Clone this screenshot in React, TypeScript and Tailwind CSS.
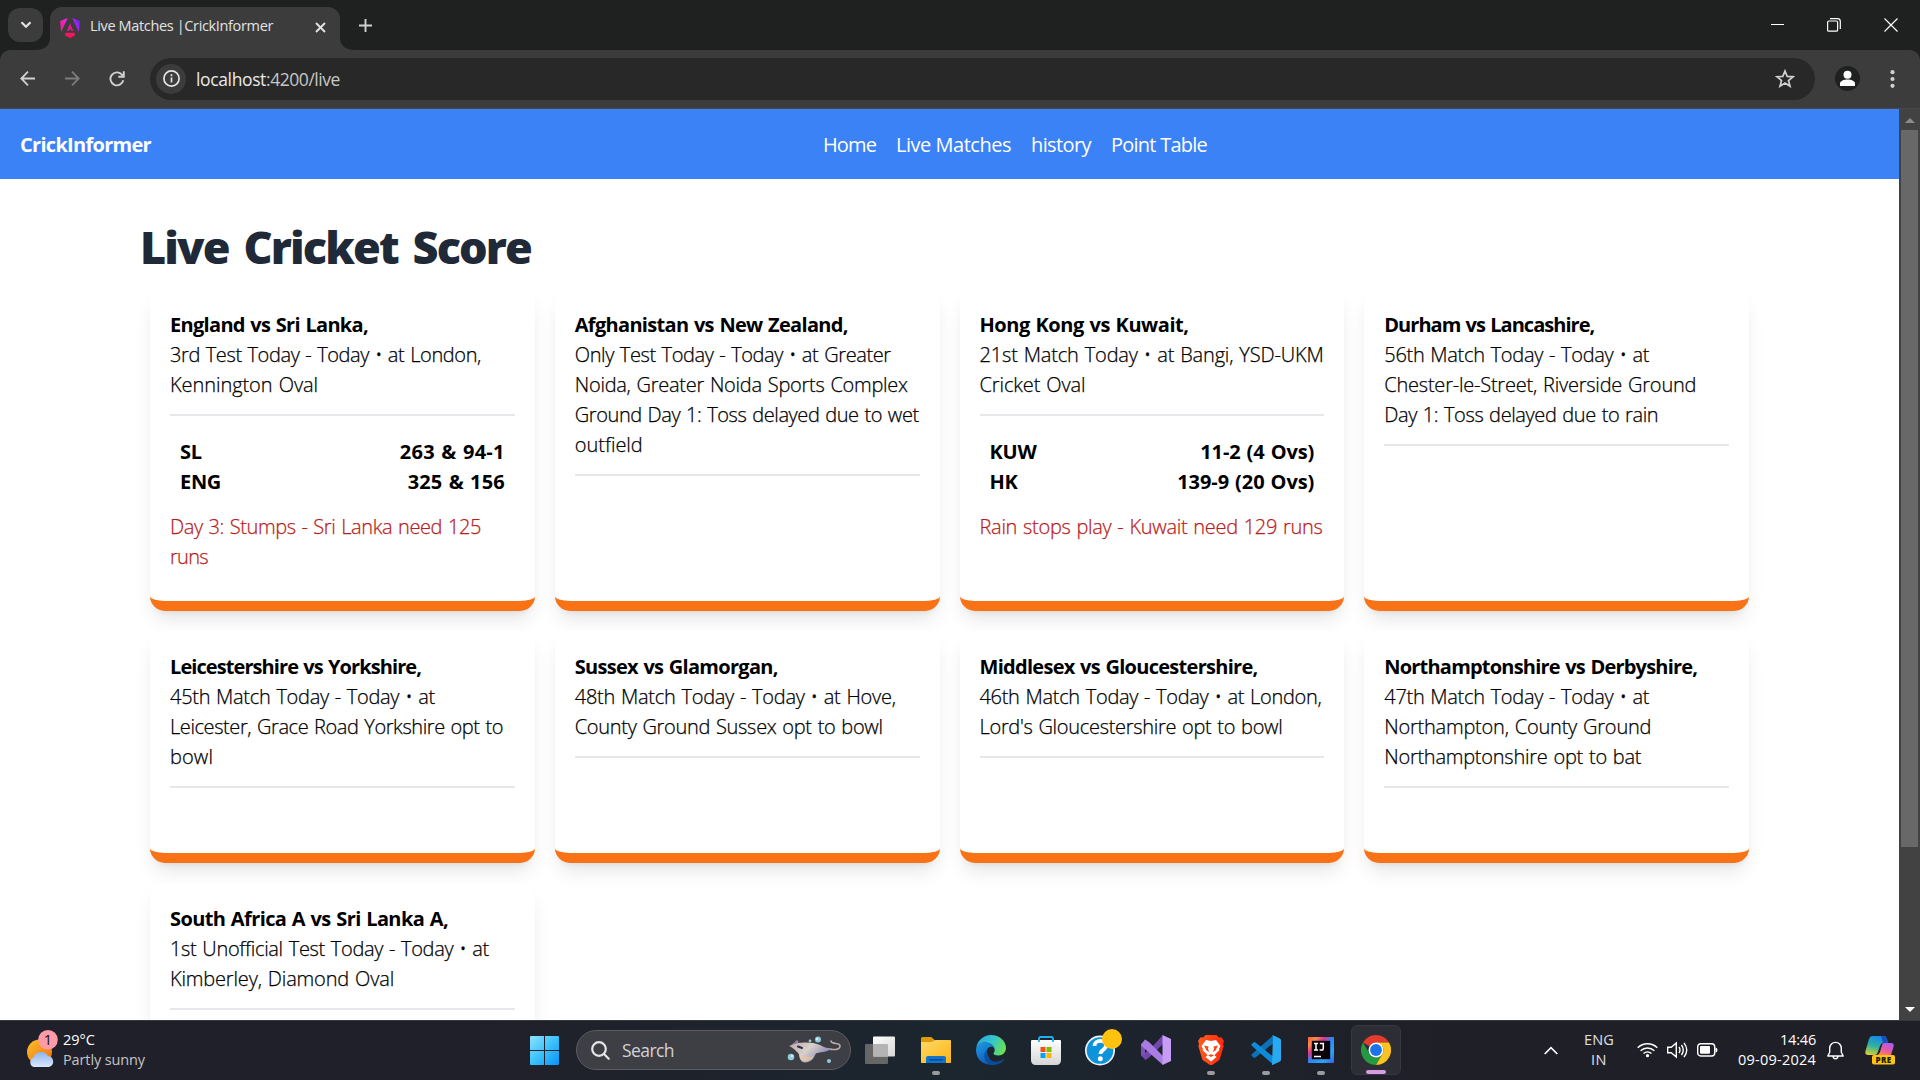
import React, { useLayoutEffect, useRef, useState } from "react";

/** A single line of text whose letter spacing is adjusted to fill `w` pixels. */
function Fit({ w, className = "", children }: { w: number; className?: string; children: string }) {
  const ref = useRef<HTMLSpanElement>(null);
  const [ls, setLs] = useState(0);
  useLayoutEffect(() => {
    if (ref.current) {
      const natural = ref.current.getBoundingClientRect().width;
      setLs((w - natural) / children.length);
    }
  }, []);
  return (
    <span ref={ref} className={"inline-block whitespace-nowrap " + className} style={{ letterSpacing: ls }}>
      {children}
    </span>
  );
}

type Line = [string, number];
type Match = { title: Line; lines: Line[]; scores?: [Line, Line][]; status?: Line[] };

const matches: Match[] = [
  {
    title: ["England vs Sri Lanka,", 198],
    lines: [["3rd Test Today - Today • at London,", 311], ["Kennington Oval", 148]],
    scores: [[["SL", 22], ["263 & 94-1", 105]], [["ENG", 41], ["325 & 156", 97]]],
    status: [["Day 3: Stumps - Sri Lanka need 125", 311], ["runs", 38]],
  },
  {
    title: ["Afghanistan vs New Zealand,", 273],
    lines: [
      ["Only Test Today - Today • at Greater", 316],
      ["Noida, Greater Noida Sports Complex", 333],
      ["Ground Day 1: Toss delayed due to wet", 344],
      ["outfield", 68],
    ],
  },
  {
    title: ["Hong Kong vs Kuwait,", 209],
    lines: [["21st Match Today • at Bangi, YSD-UKM", 344], ["Cricket Oval", 106]],
    scores: [[["KUW", 47], ["11-2 (4 Ovs)", 114]], [["HK", 28], ["139-9 (20 Ovs)", 137]]],
    status: [["Rain stops play - Kuwait need 129 runs", 343]],
  },
  {
    title: ["Durham vs Lancashire,", 210],
    lines: [
      ["56th Match Today - Today • at", 265],
      ["Chester-le-Street, Riverside Ground", 312],
      ["Day 1: Toss delayed due to rain", 274],
    ],
  },
  {
    title: ["Leicestershire vs Yorkshire,", 251],
    lines: [["45th Match Today - Today • at", 265], ["Leicester, Grace Road Yorkshire opt to", 333], ["bowl", 43]],
  },
  {
    title: ["Sussex vs Glamorgan,", 203],
    lines: [["48th Match Today - Today • at Hove,", 321], ["County Ground Sussex opt to bowl", 308]],
  },
  {
    title: ["Middlesex vs Gloucestershire,", 278],
    lines: [["46th Match Today - Today • at London,", 342], ["Lord's Gloucestershire opt to bowl", 303]],
  },
  {
    title: ["Northamptonshire vs Derbyshire,", 313],
    lines: [["47th Match Today - Today • at", 265], ["Northampton, County Ground", 267], ["Northamptonshire opt to bat", 257]],
  },
  {
    title: ["South Africa A vs Sri Lanka A,", 278],
    lines: [["1st Unofficial Test Today - Today • at", 319], ["Kimberley, Diamond Oval", 224]],
  },
];

function Card({ m }: { m: Match }) {
  return (
    <div className="rounded-[15px] border-b-[10px] border-[#f97316] bg-white px-5 pt-[21px] pb-[29px] text-[20px] leading-[30px] text-black [word-spacing:1px] shadow-[0_12px_19px_-4px_rgba(0,0,0,0.1),0_5px_7px_-5px_rgba(0,0,0,0.1)]">
      <div className="h-[30px]"><Fit w={m.title[1]} className="font-bold">{m.title[0]}</Fit></div>
      {m.lines.map(([t, w]) => (
        <div key={t} className="h-[30px]"><Fit w={w} className="font-light [-webkit-text-stroke:0.25px]">{t}</Fit></div>
      ))}
      <div className="mt-[14px] h-[2px] bg-[#e5e7eb]" />
      {m.scores ? (
        <div className="mt-[21px] px-[10px] font-bold">
          {m.scores.map(([a, b]) => (
            <div key={a[0]} className="flex h-[30px] justify-between">
              <Fit w={a[1]}>{a[0]}</Fit>
              <Fit w={b[1]}>{b[0]}</Fit>
            </div>
          ))}
        </div>
      ) : (
        <div className="h-[36px]" />
      )}
      {m.status && (
        <div className="mt-[15px] text-[#b91c1c]">
          {m.status.map(([t, w]) => (
            <div key={t} className="h-[30px]"><Fit w={w} className="font-light [-webkit-text-stroke:0.25px]">{t}</Fit></div>
          ))}
        </div>
      )}
    </div>
  );
}

function AngularIcon() {
  return (
    <svg className="h-5 w-5" viewBox="0 0 20 20">
      <defs>
        <linearGradient id="ng" x1="0" y1="0.6" x2="1" y2="0.2">
          <stop offset="0" stopColor="#f01d8f" /><stop offset="0.45" stopColor="#e62be0" /><stop offset="1" stopColor="#6a1bff" />
        </linearGradient>
        <linearGradient id="ngb" x1="0" y1="0" x2="0" y2="1">
          <stop offset="0" stopColor="#d91bb0" /><stop offset="1" stopColor="#ff1247" />
        </linearGradient>
      </defs>
      <path d="M7.800 0 0.100 3l1 11zM12.200 0l7.700 3-1 11z" fill="url(#ng)" />
      <path d="M10 5.600 6.800 13h1.900l.6-1.500h1.600l.6 1.500h1.900zM5.700 14.800h8.600l1 2.500L10 20l-5.300-2.700z" fill="url(#ngb)" />
    </svg>
  );
}

function BrowserTop() {
  return (
    <div className="h-[109px] bg-[#1f2120] text-[#e3e3e3]">
      <div className="flex h-[50px] items-start">
        <div className="mt-2 ml-2 flex h-[34px] w-[35px] items-center justify-center rounded-[12px] bg-[#3c3c3c]">
          <svg className="h-[8px] w-[12px]" viewBox="0 0 12 8" fill="none" stroke="#e3e3e3" strokeWidth="2.2"><path d="M1.500 1.300 6 5.800l4.500-4.500" /></svg>
        </div>
        <svg className="mt-[38px] -ml-[8px] h-3 w-[15px]" viewBox="0 0 15 12"><path d="M15 0v12H0C9 12 15 8 15 0z" fill="#3c3c3c" /></svg>
        <div className="mt-[7px] flex h-[43px] w-[290px] items-center rounded-t-[12px] bg-[#3c3c3c] pl-[10px]">
          <div className="-mt-px"><AngularIcon /></div>
          <div className="ml-[10px] h-[26px] text-[14.5px] leading-[20px]"><Fit w={183}>Live Matches |CrickInformer</Fit></div>
          <svg className="mb-[3px] ml-[42px] h-[11px] w-[11px]" viewBox="0 0 11 11" stroke="#e3e3e3" strokeWidth="1.900"><path d="M1 1l9 9M10 1l-9 9" /></svg>
        </div>
        <svg className="mt-[38px] h-3 w-[15px]" viewBox="0 0 15 12"><path d="M0 0v12h15C6 12 0 8 0 0z" fill="#3c3c3c" /></svg>
        <svg className="mt-[19px] ml-[4px] h-[13px] w-[13px]" viewBox="0 0 13 13" stroke="#d0d0d0" strokeWidth="1.900"><path d="M6.500 0v13M0 6.500h13" /></svg>
        <div className="ml-auto flex h-[49px] items-center pr-[22px]">
          <div className="mr-[-1px] ml-px h-px w-[13px] bg-white" />
          <svg className="ml-[44px] h-[14px] w-[14px]" viewBox="0 0 14 14" fill="none" stroke="#fff" strokeWidth="1.200"><rect x="0.600" y="3" width="10" height="10.200" rx="1.300" /><path d="M3 .7h7.500a2.800 2.800 0 0 1 2.800 2.800V11" /></svg>
          <svg className="ml-[43px] h-[14px] w-[14px]" viewBox="0 0 14 14" stroke="#fff" strokeWidth="1.200"><path d="M.5.5l13 13M13.500.5l-13 13" /></svg>
        </div>
      </div>
      <div className="flex h-[59px] items-center rounded-t-[10px] border-b border-[#484848] bg-[#3c3c3c] pb-px pl-5">
        <svg className="h-[15px] w-[15px]" viewBox="0 0 15 15" fill="none" stroke="#d0d0d0" strokeWidth="1.800"><path d="M15 7.500H1.500M8 .7 1.300 7.500 8 14.300" /></svg>
        <svg className="ml-[30px] h-[15px] w-[15px]" viewBox="0 0 15 15" fill="none" stroke="#7c7c7c" strokeWidth="1.800"><path d="M0 7.500h13.500M7 .7l6.700 6.800L7 14.300" /></svg>
        <svg className="ml-[29px] h-[16px] w-[16px]" viewBox="0 0 16 16" fill="none" stroke="#d0d0d0" strokeWidth="1.900"><path d="M14.300 9.300A6.500 6.500 0 1 1 12.700 3.400L14.500 5.400M14.800.3v5.500H9.300" /></svg>
        <div className="ml-[25px] flex h-[42px] w-[1665px] items-center rounded-full bg-[#282828] pl-[6px]">
          <div className="flex h-[30px] w-[30px] items-center justify-center rounded-full bg-[#3c3c3c]">
            <svg className="h-[17px] w-[17px]" viewBox="0 0 17 17" fill="none" stroke="#e3e3e3"><circle cx="8.500" cy="8.500" r="7.600" strokeWidth="1.700" /><path d="M8.500 7.500v5M8.500 4.300v1.900" strokeWidth="1.700" /></svg>
          </div>
          <div className="ml-[10px] flex pt-px text-[17.500px] leading-[24px]">
            <Fit w={70} className="text-[#e8e8e8]">localhost</Fit><Fit w={74} className="text-[#c7c7c7]">:4200/live</Fit>
          </div>
          <svg className="mr-5 ml-auto h-[19px] w-[20px]" viewBox="0 0 20 19" fill="none" stroke="#d0d0d0" strokeWidth="1.700"><path d="M10 2l2.200 5.400 5.800.4-4.500 3.700 1.500 5.700-5-3.200-5 3.200 1.500-5.700L2 7.800l5.800-.4z" /></svg>
        </div>
        <svg className="ml-5 h-[25px] w-[25px]" viewBox="0 0 25 25"><circle cx="12.500" cy="12.500" r="12.500" fill="#1f2120" /><circle cx="12.500" cy="8.700" r="4" fill="#fff" /><path d="M5 20v-2.500c0-2.500 4-4 7.500-4s7.500 1.500 7.500 4V20z" fill="#fff" /></svg>
        <svg className="ml-[30px] h-[18px] w-[5px]" viewBox="0 0 5 18" fill="#d0d0d0"><circle cx="2.500" cy="2.200" r="2.100" /><circle cx="2.500" cy="9" r="2.100" /><circle cx="2.500" cy="15.800" r="2.100" /></svg>
      </div>
    </div>
  );
}

function StartIcon() {
  return (
    <svg className="h-[29px] w-[29px]" viewBox="0 0 29 29">
      <defs><linearGradient id="win" x1="0" y1="0" x2="1" y2="1"><stop offset="0" stopColor="#8fe2ff" /><stop offset="0.500" stopColor="#3cc2fb" /><stop offset="1" stopColor="#0a92f8" /></linearGradient></defs>
      <path d="M0 1q0-1 1-1h13v14H0zM15 0h13q1 0 1 1v13H15zM0 15h14v14H1q-1 0-1-1zM15 15h14v13q0 1-1 1H15z" fill="url(#win)" />
    </svg>
  );
}

function RayIcon() {
  return (
    <svg className="h-[28px] w-[56px]" viewBox="0 0 56 28">
      <defs><linearGradient id="ray" x1="0" y1="0" x2="1" y2="0.500"><stop offset="0" stopColor="#b9a79b" /><stop offset="0.500" stopColor="#d9d0cb" /><stop offset="1" stopColor="#7f82b0" /></linearGradient></defs>
      <path d="M44 5c1 4 9 1 9 5s-6 4-12 3" fill="none" stroke="#b9aba6" strokeWidth="1.600" strokeLinecap="round" />
      <path d="M2 10c3-1 5-2 7-5 1-1 3 0 2 2 6-1 16-1 22 2 4 2 7 4 13 3-5 4-11 4-16 5-3 1-2 7-9 9-6 2-9-3-9-8-2-2-4-5-10-8z" fill="url(#ray)" />
      <path d="M18 25c-5 0-5-4-4-5 4 0 9 2 13 0-2 3-5 5-9 5z" fill="#edc79c" opacity=".7" />
      <path d="M9 5c-2 2-4 3-5 4l7-2c0-2-1-3-2-2z" fill="#8c78a8" />
      <path d="M11 10.500l4 1.500" stroke="#26304f" strokeWidth="2" strokeLinecap="round" />
      <circle cx="4" cy="21" r="3.300" fill="#8fcdd8" /><circle cx="31" cy="3.500" r="3" fill="#8fcdd8" /><circle cx="23" cy="5" r="1.400" fill="#8fcdd8" /><circle cx="42" cy="25" r="2" fill="#8fcdd8" />
      <circle cx="5" cy="20" r="1" fill="#e4fbff" /><circle cx="30" cy="3" r="1" fill="#e4fbff" />
    </svg>
  );
}

function TaskViewIcon() {
  return (
    <svg className="-ml-[2px] h-[29px] w-[30px]" viewBox="0 0 30 29">
      <defs><linearGradient id="tv" x1="0" y1="0" x2="1" y2="1"><stop offset="0" stopColor="#fff" /><stop offset="1" stopColor="#d6d6d6" /></linearGradient></defs>
      <rect x="0" y="8" width="23" height="20" rx="1" fill="#666" /><rect x="8" y="0.500" width="22" height="20" rx="1" fill="url(#tv)" /><path d="M8 8h14q1 0 1 1v11.500H9q-1 0-1-1z" fill="#b4b4b4" />
    </svg>
  );
}
function FolderIcon() {
  return (
    <svg className="h-[28px] w-[30px]" viewBox="0 0 30 28">
      <defs><linearGradient id="fo" x1="0" y1="0" x2="1" y2="1"><stop offset="0" stopColor="#ffd968" /><stop offset="1" stopColor="#fbb514" /></linearGradient></defs>
      <path d="M0 2.500Q0 1 1.500 1h8q1 0 2 1l2.500 2.500V10H0z" fill="#e09b0a" />
      <path d="M0 6h10q1 0 2-.8l1-.7q.8-.5 1.500-.5H29q1 0 1 1v21.500q0 .5-1 .5H1q-1 0-1-.5z" fill="url(#fo)" />
      <path d="M5 27v-5q0-2 2-2h16q2 0 2 2v5z" fill="#1273cd" /><path d="M9 23.800h12.500" stroke="#0b4a8f" strokeWidth="1.400" strokeLinecap="round" />
    </svg>
  );
}
function EdgeIcon() {
  return (
    <svg className="h-[30px] w-[30px]" viewBox="0 0 30 30">
      <defs>
        <linearGradient id="e1" x1="0" y1="0.300" x2="1" y2="0.600"><stop offset="0" stopColor="#2aa5e2" /><stop offset="0.500" stopColor="#33c6cb" /><stop offset="1" stopColor="#6fe04e" /></linearGradient>
        <linearGradient id="e2" x1="0" y1="0" x2="0.600" y2="1"><stop offset="0" stopColor="#1f9be6" /><stop offset="1" stopColor="#0a58b8" /></linearGradient>
      </defs>
      <path d="M.3 13C1.200 5.500 7.500 0 15 0c8.500 0 15 6 15 13 0 4.500-3.500 7.500-7.500 7.500-3 0-5-1-5-2 0-.8 1.200-1.500 1.200-3.500C18.700 11 14 7.500 9 7.500c-4 0-7 2-8.700 5.500z" fill="url(#e1)" />
      <path d="M0 15C0 11 4 7.500 9 7.500c4.500 0 8 2.500 9.300 5.500-1.300-1-2.500-1.300-3.600-1.200C12 12 10.500 14.500 11 18c.6 5 5 9.500 10 10.500C13 32 0 28 0 15z" fill="url(#e2)" />
      <path d="M11.200 14.500c-2.700 6 2 12.300 8.300 12.300 3.500 0 6-1 8-2.800.5-.4.800 0 .5.500-2 3.200-6 5.500-11 5.500-8-.3-11.500-10.500-5.800-15.500z" fill="#0c4c9c" />
    </svg>
  );
}
function StoreIcon() {
  return (
    <svg className="h-[30px] w-[30px]" viewBox="0 0 30 30">
      <defs><linearGradient id="st" x1="0" y1="0" x2="0" y2="1"><stop offset="0" stopColor="#fff" /><stop offset="1" stopColor="#d5d5d5" /></linearGradient></defs>
      <path d="M8 6V3.500Q8 2 9.500 2h11Q22 2 22 3.500V6" fill="none" stroke="#23aef0" strokeWidth="1.800" />
      <path d="M0 6q0-1 1-1h28q1 0 1 1v19q0 5-5 5H5q-5 0-5-5z" fill="url(#st)" />
      <path d="M9.500 12h5v5h-5z" fill="#f1511b" /><path d="M15.500 12h5v5h-5z" fill="#80bb02" /><path d="M9.500 18h5v5h-5z" fill="#04a2ee" /><path d="M15.500 18h5v5h-5z" fill="#fdb702" />
      <path d="M8 5v2M22 5v2" stroke="#23aef0" strokeWidth="1.800" />
    </svg>
  );
}
function HelpIcon() {
  return (
    <svg className="-mt-[6px] ml-[6px] h-[37px] w-[37px]" viewBox="0 0 37 37">
      <circle cx="15" cy="21.500" r="15" fill="#f1f6fa" /><circle cx="15" cy="21.500" r="13.300" fill="#0c93d9" />
      <path d="M9.500 17c0-7 11.500-6.500 11.500-.5 0 4.500-5.500 4-5.500 8.500" fill="none" stroke="#fff" strokeWidth="3.800" /><circle cx="15.300" cy="29.800" r="2.500" fill="#fff" />
      <circle cx="27" cy="10" r="10" fill="#ffc20e" />
    </svg>
  );
}
function VisualStudioIcon() {
  return (
    <svg className="h-[30px] w-[30px]" viewBox="0 0 30 30">
      <path d="M0 9.500 4 7l9 8-9 8-4-2.500z" fill="#7a52b8" /><path d="M4 12v6l4-3z" fill="#1e222b" />
      <path d="M22 0v9L8 22.500 4.500 25 0 20.500l4-1z" fill="#7346b0" />
      <path d="M0 9.500 4 4.500 8 7l14 14v9L0 10.500z" fill="#a87ce0" />
      <path d="M21.500 0 30 4v22l-8.500 4z" fill="#c69cf6" />
    </svg>
  );
}
function BraveIcon() {
  return (
    <svg className="h-[30px] w-[26px]" viewBox="0 0 26 30">
      <defs><linearGradient id="br" x1="0" y1="0" x2="1" y2="0"><stop offset="0" stopColor="#ff5a1f" /><stop offset="1" stopColor="#ff2a0a" /></linearGradient></defs>
      <path d="M7.500 0h11l2.500 2.500 2.500-.3L26 6l-1 3 .7 2-3.700 12.500q-.5 1.500-2 2.500l-6 4h-2l-6-4q-1.500-1-2-2.500L.3 11 1 9 0 6l2.500-3.800 2.500.3z" fill="url(#br)" />
      <path d="M8 5l5 1 5-1 4.500 6-1.500 3 .5 1-4 4-1 1.500 2 1.500-5.500 4.500L7.500 22l2-1.500L8.500 19l-4-4 .5-1-1.500-3z" fill="#fff" />
      <path d="M6 10.500l4.500 1-.5 2.500 1.300 3-2.800-1.500zM20 10.500l-4.500 1 .5 2.500-1.300 3 2.800-1.500zM10 20.300l3-1.100 3 1.100-3 1.700z" fill="#ff4418" />
    </svg>
  );
}
function VSCodeIcon() {
  return (
    <svg className="h-[30px] w-[30px]" viewBox="0 0 30 30">
      <path d="M22 8.500v-8L1 19q-1.300 1 0 2.200l1.500 1.300q1 .8 2 0z" fill="#0a72b8" />
      <path d="M22 21.500v8L1 11Q-.3 10 1 8.800l1.500-1.300q1-.8 2 0z" fill="#0e8bd8" />
      <path d="M21 29.700q-.8.300.500.300l7-3.200q1.500-.7 1.500-2V5.200q0-1.300-1.500-2L21.500 0Q20.600-.2 22 1z" fill="#29a9f2" />
    </svg>
  );
}
function IntelliJIcon() {
  return (
    <svg className="h-[26px] w-[26px]" viewBox="0 0 26 26">
      <defs><linearGradient id="ij" x1="0" y1="0" x2="1" y2="1"><stop offset="0" stopColor="#fe5a3a" /><stop offset="0.180" stopColor="#fb8a4c" /><stop offset="0.330" stopColor="#e0348e" /><stop offset="0.500" stopColor="#2a86f4" /><stop offset="0.750" stopColor="#2aa5f8" /><stop offset="1" stopColor="#3a59e8" /></linearGradient></defs>
      <path d="M0 0h26v26H0z" fill="url(#ij)" /><path d="M3.800 3.800h18.400v18.400H3.800z" fill="#0b0109" />
      <path d="M6 6.500h4M8 6.500v6.500M6 13h4M11.800 6.500h3.500v4.700q0 1.800-1.700 1.800h-2" fill="none" stroke="#fff" strokeWidth="1.500" /><path d="M6 19.500h7" stroke="#fff" strokeWidth="1.500" />
    </svg>
  );
}
function ChromeIcon() {
  return (
    <svg className="h-[30px] w-[30px] shrink-0" viewBox="0 0 48 48">
      <path d="M24 0a24 24 0 0 1 20.800 12H24a12 12 0 0 0-10.400 6L3.200 12A24 24 0 0 1 24 0z" fill="#e33b2e" />
      <path d="M3.200 12 13.600 30A12 12 0 0 0 24 36l10.400-6L24 48A24 24 0 0 1 3.200 12z" fill="#249a41" />
      <path d="M44.800 12A24 24 0 0 1 24 48l10.400-18a12 12 0 0 0 0-12L24 12z" fill="#fcc31e" />
      <circle cx="24" cy="24" r="12" fill="#fff" /><circle cx="24" cy="24" r="9.500" fill="#1a73e8" />
    </svg>
  );
}
function CopilotIcon() {
  return (
    <svg className="h-[30px] w-[30px]" viewBox="0 0 30 30">
      <defs>
        <linearGradient id="c1" x1="0.400" y1="0" x2="0.100" y2="1"><stop offset="0" stopColor="#1a87e8" /><stop offset="0.500" stopColor="#2fb49a" /><stop offset="1" stopColor="#e8d02c" /></linearGradient>
        <linearGradient id="c2" x1="0.700" y1="0" x2="0.200" y2="1"><stop offset="0" stopColor="#a95cf0" /><stop offset="0.600" stopColor="#ee5a9c" /><stop offset="1" stopColor="#ff8a50" /></linearGradient>
      </defs>
      <path d="M7 1h12q2 0 3 3l1 4h-5q-2 0-3 3l-2.500 7q-.7 2-3 2H3q-3.500 0-2.500-4L4 4q1-3 3-3z" fill="url(#c1)" />
      <path d="M16 1h3q2 0 3 3l1 4h-5z" fill="#1b4fc0" />
      <path d="M19 8h7q3.500 0 2.500 4L26 20H12q2 0 3-3l2-7q.500-2 2-2z" fill="url(#c2)" />
      <rect x="7" y="20" width="23" height="9.500" rx="2" fill="#ffc412" />
      <text x="18.500" y="27.500" textAnchor="middle" fontSize="8" fontWeight="800" fill="#1b1b1b" letterSpacing="0.400">PRE</text>
    </svg>
  );
}

const apps = [
  { Icon: TaskViewIcon }, { Icon: FolderIcon, dot: true }, { Icon: EdgeIcon }, { Icon: StoreIcon }, { Icon: HelpIcon },
  { Icon: VisualStudioIcon }, { Icon: BraveIcon, dot: true }, { Icon: VSCodeIcon, dot: true }, { Icon: IntelliJIcon, dot: true },
];

function Taskbar() {
  return (
    <div className="flex h-[60px] items-center border-t border-[#35373d] bg-linear-to-r from-[#20202a] from-25% via-[#1b262f] via-50% to-[#1f1f28] to-75% pb-px text-white">
      <div className="flex w-[530px] items-center pl-[27px]">
        <svg className="-mt-[3px] h-[38px] w-[32px]" viewBox="0 0 32 38">
          <defs>
            <linearGradient id="sun" x1="0" y1="0" x2="1" y2="1"><stop offset="0" stopColor="#f9c02b" /><stop offset="1" stopColor="#f26b12" /></linearGradient>
            <linearGradient id="cl" x1="0" y1="0" x2="0" y2="1"><stop offset="0" stopColor="#8db4f0" /><stop offset="1" stopColor="#dbe6fa" /></linearGradient>
          </defs>
          <circle cx="12.500" cy="22" r="12.500" fill="url(#sun)" />
          <path d="M7 37a5 5 0 0 1-.5-9.500A8 8 0 0 1 21 26a5.600 5.600 0 0 1 1 11z" fill="url(#cl)" />
          <circle cx="21" cy="9.800" r="9.800" fill="#ff9ba6" />
          <text x="21" y="15" textAnchor="middle" fontSize="14.500" fill="#111">1</text>
        </svg>
        <div className="ml-1 flex flex-col text-[14.500px] leading-5">
          <Fit w={32} className="self-start">29°C</Fit>
          <Fit w={82} className="self-start text-[#c4c4c8]">Partly sunny</Fit>
        </div>
      </div>
      <StartIcon />
      <div className="ml-[17px] flex h-10 w-[275px] items-center rounded-full border border-[#5c5c63] bg-[#3e3e45] pr-[7px] pl-[14px]">
        <svg className="h-[19px] w-[19px]" viewBox="0 0 19 19" fill="none" stroke="#e6e6e6" strokeWidth="2.200" strokeLinecap="round"><circle cx="8" cy="8" r="6.800" /><path d="M13 13l4.700 4.700" /></svg>
        <div className="ml-3 text-[17.500px] leading-6 text-[#d2d2d6]"><Fit w={52}>Search</Fit></div>
        <div className="ml-auto"><RayIcon /></div>
      </div>
      <div className="ml-[2px] flex">
        {apps.map(({ Icon, dot }, i) => (
          <div key={i} className="flex h-[58px] w-[55px] flex-col items-center">
            <div className="flex h-[58px] shrink-0 items-center"><Icon /></div>
            <div className={dot ? "-mt-2 h-1 w-2 shrink-0 rounded-full bg-[#9a9a9f]" : "hidden"} />
          </div>
        ))}
        <div className="mt-1 ml-[3px] flex h-[50px] w-[50px] flex-col items-center rounded-[6px] border border-[#38373f] bg-[#2d2d36] pt-[9px]">
          <ChromeIcon />
          <div className="mt-[5px] h-1 w-5 shrink-0 rounded-full bg-[#d69be0]" />
        </div>
      </div>
      <div className="ml-auto flex items-center pr-[25px]">
        <svg className="h-[9px] w-[14px]" viewBox="0 0 14 9" fill="none" stroke="#fff" strokeWidth="1.700"><path d="M.7 8 7 1.700 13.300 8" /></svg>
        <div className="ml-[26px] flex w-[30px] flex-col items-center text-[14.500px] leading-5 text-[#e0e0e2]"><Fit w={30}>ENG</Fit><Fit w={16}>IN</Fit></div>
        <svg className="ml-[23px] h-[16px] w-[21px]" viewBox="0 0 21 16" fill="none" stroke="#fff" strokeWidth="1.400"><path d="M.7 5.800a14 14 0 0 1 19.600 0M3.600 8.700a10 10 0 0 1 13.800 0M6.500 11.500a6 6 0 0 1 8 0" /><circle cx="10.500" cy="13.700" r="1.600" fill="#fff" stroke="none" /></svg>
        <svg className="ml-[9px] h-[18px] w-[21px]" viewBox="0 0 21 18" fill="none" stroke="#fff" strokeWidth="1.400"><path d="M.7 6.300h3.500L9.300 2v14L4.200 11.700H.7zM12 6q2 3 0 6M14.500 4q3.500 5 0 10M17 1.800q5.500 7.200 0 14.400" /></svg>
        <svg className="ml-[9px] h-[14px] w-[21px]" viewBox="0 0 21 14"><rect x="0.700" y="0.700" width="17" height="12.300" rx="3" fill="none" stroke="#fff" strokeWidth="1.400" /><rect x="3" y="3" width="10" height="7.700" rx="1" fill="#fff" /><path d="M18.500 4.500q2 0 2 2.500t-2 2.500z" fill="#fff" /></svg>
        <div className="ml-[19px] flex w-[79px] flex-col items-end text-[14.500px] leading-5"><Fit w={36}>14:46</Fit><Fit w={78}>09-09-2024</Fit></div>
        <svg className="ml-[11px] h-[19px] w-[17px]" viewBox="0 0 17 19" fill="none" stroke="#fff" strokeWidth="1.400"><path d="M2.700 7.200a5.800 5.800 0 0 1 11.600 0v4l1.900 3.800H.8l1.900-3.800zM6 15.300q.5 2.400 2.500 2.400t2.500-2.400" strokeLinejoin="round" /></svg>
        <div className="ml-[21px]"><CopilotIcon /></div>
      </div>
    </div>
  );
}

export default function App() {
  return (
    <div className="flex h-[1080px] w-[1920px] flex-col overflow-hidden bg-white font-['Open_Sans',sans-serif]">
      <BrowserTop />
      <div className="flex h-[911px]">
        <div className="flex w-[1899px] flex-col overflow-hidden">
          <div className="flex h-[70px] shrink-0 items-center bg-[#3b82f6] pt-[2px] pl-5 text-[20px] leading-[30px] text-white">
            <Fit w={131} className="font-bold">CrickInformer</Fit>
            <div className="ml-[672px] flex gap-5">
              <Fit w={53}>Home</Fit><Fit w={115}>Live Matches</Fit><Fit w={60}>history</Fit><Fit w={96}>Point Table</Fit>
            </div>
          </div>
          <div className="w-[1759px] pt-[30px] pl-[140px]">
            <h1 className="h-[70px] text-[45px] leading-[76px] font-extrabold text-[#1f2937] [word-spacing:5px]"><Fit w={391}>Live Cricket Score</Fit></h1>
            <div className="grid grid-cols-4 gap-5 p-[10px]">
              {matches.map((m) => <Card key={m.title[0]} m={m} />)}
            </div>
          </div>
        </div>
        <div className="flex w-[21px] flex-col items-center bg-[#424242] pt-[9px] pb-2">
          <svg className="h-[5px] w-[10px] shrink-0" viewBox="0 0 10 5"><path d="M5 0l5 5H0z" fill="#8b8b8b" /></svg>
          <div className="mt-[7px] h-[717px] w-[17px] bg-[#686868]" />
          <svg className="mt-auto h-[5px] w-[10px] shrink-0" viewBox="0 0 10 5"><path d="M5 5l5-5H0z" fill="#fff" /></svg>
        </div>
      </div>
      <Taskbar />
    </div>
  );
}
